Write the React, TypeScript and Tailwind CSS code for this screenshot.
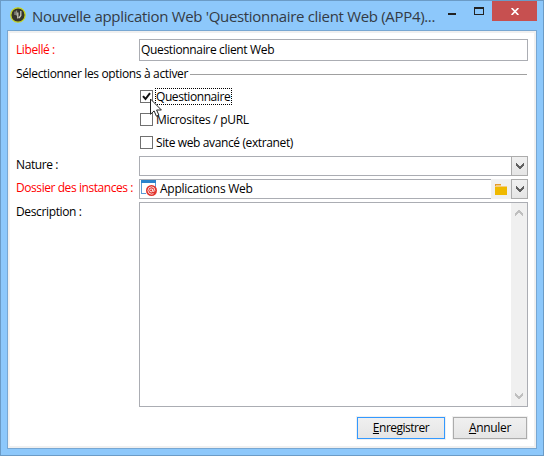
import type { ReactNode } from "react";

function Chevron({ up = false, color = "#606060" }: { up?: boolean; color?: string }) {
  return (
    <svg width="8" height="7" viewBox="0 0 8 7" className={up ? "rotate-180" : ""} shapeRendering="crispEdges">
      <path d="M0 0h1v1h1v1h1v1h2v-1h1v-1h1v-1h1v3h-1v1h-1v1h-1v1h-2v-1h-1v-1h-1v-1h-1z" fill={color} />
    </svg>
  );
}

function Label({ children, className = "" }: { children: ReactNode; className?: string }) {
  return <div className={`w-[123px] shrink-0 whitespace-nowrap ${className}`}>{children}</div>;
}

function DropButton() {
  return (
    <div className="flex w-[17px] shrink-0 items-center justify-center border border-[#acacac] bg-linear-to-b from-[#f0f0f0] to-[#e5e5e5]">
      <Chevron />
    </div>
  );
}

function Option({ label, checked = false, spacing }: { label: string; checked?: boolean; spacing: string }) {
  return (
    <div className="flex h-[23px] items-center">
      <div className="size-[13px] border border-[#707070] bg-white">
        {checked && (
          <svg width="11" height="11" viewBox="0 0 11 11">
            <path d="M2 5.2 4.5 8 9 2.2" fill="none" stroke="#111" strokeWidth="2" />
          </svg>
        )}
      </div>
      <div className={`ml-[2px] h-[17px] whitespace-nowrap border border-dotted pr-px leading-[16px] ${checked ? "w-[77px] border-black" : "border-transparent"} ${spacing}`}>{label}</div>
    </div>
  );
}

function TitleBar() {
  return (
    <div className="flex h-[29px] items-start">
      <svg className="ml-[9px] mt-[6px] shrink-0" width="16" height="16" viewBox="0 0 16 16">
        <circle cx="8" cy="8" r="7.2" fill="#35352c" stroke="#c7d51c" strokeWidth="1.3" />
        <path d="M5 4.5v3.5M6.5 3.5v5" stroke="#8f8f82" strokeWidth="1.3" fill="none" />
        <path d="M7.8 5.5v6M10.8 4v4.5L9 11" stroke="#c9c9bb" strokeWidth="1.3" fill="none" />
      </svg>
      <div className="ml-[6px] w-[414px] shrink-0 whitespace-nowrap text-[15px] leading-[30px] tracking-[-0.32px] text-[#343b45]">
        Nouvelle application Web 'Questionnaire client Web (APP4)...
      </div>
      <div className="ml-[2px] mt-[12px] h-[2px] w-[8px] shrink-0 bg-[#222]" />
      <div className="ml-[18px] mt-[6px] h-[8px] w-[10px] shrink-0 border border-t-2 border-[#222]" />
      <div className="ml-[8px] flex h-[20px] w-[45px] shrink-0 items-center justify-center bg-[#c75050]">
        <svg width="8" height="7" viewBox="0 0 8 7">
          <path d="M.6 0 7.4 7M7.4 0 .6 7" stroke="white" strokeWidth="1.7" />
        </svg>
      </div>
    </div>
  );
}

export default function App() {
  return (
    <div className="relative h-[460px] w-[549px] overflow-hidden bg-white font-['Open_Sans','Noto_Sans',sans-serif] text-[12px] text-black">
      <div className="flex h-[456px] w-[544px] flex-col border border-[#6b9bc6] bg-[#8dc8fb]">
        <TitleBar />
        <div className="ml-[6px] h-[419px] w-[530px] border border-[#78a7d2] bg-[#f0f0f0] p-[2px] pl-px">
          <div className="flex h-full w-full flex-col border-l border-[#f5f5f5] bg-white pl-[6px] pr-[6px]">
            <div className="mt-[6px] flex h-[22px] shrink-0 items-center">
              <Label className="tracking-[-0.4px] text-[#ff0000]">Libellé :</Label>
              <div className="h-full w-[389px] border border-[#abadb3] pl-px leading-[19px] tracking-[-0.34px]">Questionnaire client Web</div>
            </div>
            <div className="mt-[3px] flex h-[20px] shrink-0 items-center">
              <div className="w-[174px] shrink-0 whitespace-nowrap tracking-[-0.35px]">Sélectionner les options à activer</div>
              <div className="h-px w-[337px] bg-[#a0a0a0]" />
            </div>
            <div className="ml-[124px] mt-px flex shrink-0 flex-col">
              <Option label="Questionnaire" checked spacing="tracking-[-0.42px]" />
              <Option label="Microsites / pURL" spacing="tracking-[-0.28px]" />
              <Option label="Site web avancé (extranet)" spacing="tracking-[-0.38px]" />
            </div>
            <div className="mt-[2px] flex h-[20px] shrink-0">
              <Label className="leading-[18px] tracking-[-0.4px]">Nature :</Label>
              <div className="w-[372px] border border-r-0 border-[#abadb3]" />
              <DropButton />
            </div>
            <div className="mt-[3px] flex h-[20px] shrink-0">
              <Label className="leading-[18px] tracking-[-0.43px] text-[#ff0000]">Dossier des instances :</Label>
              <div className="flex w-[352px] border border-r-0 border-[#abadb3] pl-px">
                <svg width="16" height="17" viewBox="0 0 16 17" className="shrink-0">
                  <path d="M.5 14V1h14v6" fill="white" stroke="#5b9bd5" />
                  <path d="M0 13.5h5" stroke="#5b9bd5" />
                  <path d="M0 0h15v3H0z" fill="#2b83cc" />
                  <circle cx="10.5" cy="10.5" r="5.5" fill="#e2342d" />
                  <circle cx="10.2" cy="10.4" r="1.5" fill="none" stroke="white" strokeWidth=".9" />
                  <path d="M11.8 8.8v2.3q1.6 1 2-.6Q14 7 10.5 6.8 7 7 6.9 10.5 7 14 10.5 14.2l2-.5" fill="none" stroke="white" strokeWidth=".8" />
                </svg>
                <span className="ml-[3px] whitespace-nowrap leading-[17px] tracking-[-0.25px]">Applications Web</span>
              </div>
              <div className="flex w-[20px] items-center justify-center bg-[#f0f0f0]">
                <svg width="12" height="11" viewBox="0 0 12 11" shapeRendering="crispEdges">
                  <path d="M0 0h6v2h6v1H0z" fill="#e49a2c" />
                  <path d="M1 1h5v1h6v1H0V2h1z" fill="#f5cc80" />
                  <path d="M0 3h12v8H0z" fill="#efb900" />
                </svg>
              </div>
              <DropButton />
            </div>
            <div className="mt-[3px] flex h-[205px] shrink-0">
              <Label className="leading-[19px] tracking-[-0.36px]">Description :</Label>
              <div className="flex w-[389px] justify-end border border-[#abadb3]">
                <div className="flex w-[16px] flex-col items-center justify-between bg-[#f0f0f0] py-[6px] pr-px">
                  <Chevron up color="#bfbfbf" />
                  <Chevron color="#bfbfbf" />
                </div>
              </div>
            </div>
            <div className="mt-[9px] flex shrink-0 justify-end gap-[6px]">
              <div className="border border-[#f0f0f0]">
                <div className="h-[22px] w-[88px] border border-[#3399ff] bg-linear-to-b from-[#f0f0f0] to-[#e5e5e5] text-center leading-[20px] tracking-[-0.5px]"><u>E</u>nregistrer</div>
              </div>
              <div className="border border-[#f0f0f0]">
                <div className="h-[22px] w-[74px] border border-[#acacac] bg-linear-to-b from-[#f0f0f0] to-[#e5e5e5] text-center leading-[20px] tracking-[-0.3px]"><u>A</u>nnuler</div>
              </div>
            </div>
          </div>
        </div>
      </div>
      <svg className="absolute left-[150px] top-[98px]" width="12" height="19" viewBox="0 0 12 19">
        <path d="M.5 1v15.3l3.6-3.4 2.3 5.3 2.5-1.1-2.3-5.1h4.8z" fill="white" stroke="#222" strokeWidth="1" />
      </svg>
    </div>
  );
}
